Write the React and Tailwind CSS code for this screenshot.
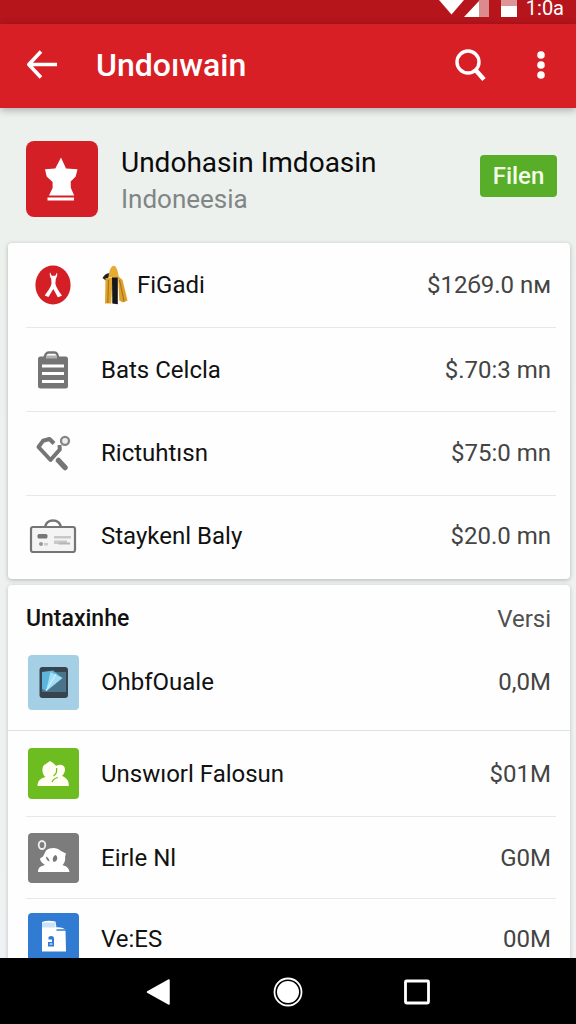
import React from "react";

function StatusBar() {
  return (
    <div className="flex h-6 shrink-0 items-start justify-end bg-[#b6151c] pr-[12px] text-white">
      <svg className="h-[17px] w-[80px]" viewBox="0 0 80 17" aria-hidden="true">
        <path d="M1 0h25L13.500 14.500z" fill="#fff" />
        <path d="M26 17h15V1z" fill="#fff" />
        <path d="M41 0h10v17H41z" fill="#fff" opacity=".5" />
        <path d="M63 0h16v6H63z" fill="#fff" opacity=".55" />
        <path d="M63 6h16v11H63z" fill="#fff" />
      </svg>
      <span className="ml-2 text-xl leading-4">1:0a</span>
    </div>
  );
}

function AppBar() {
  return (
    <header className="z-10 flex h-[84px] shrink-0 items-center bg-[#d91f26] pr-[23px] pb-[2px] pl-[26px] text-white shadow-[0_2px_8px_rgba(0,0,0,0.3)]">
      <button type="button" aria-label="Back" className="h-8 w-8">
        <svg viewBox="0 0 32 32" className="h-8 w-8" fill="none" stroke="#fff" strokeWidth="3.600">
          <path d="M31 15.500H3M15 2.500 2.800 15.500 15 28.500" strokeLinejoin="round" />
        </svg>
      </button>
      <h1 className="ml-[38px] flex-1 text-[32px] leading-10 font-medium">Undoıwain</h1>
      <button type="button" aria-label="Search" className="h-9 w-9">
        <svg viewBox="0 0 36 36" className="h-9 w-9" fill="none" stroke="#fff">
          <circle cx="17" cy="15" r="11" strokeWidth="3.400" />
          <path d="m24.500 23 8.500 9.500" strokeWidth="4.500" />
        </svg>
      </button>
      <button type="button" aria-label="More options" className="ml-[42px] h-8 w-6">
        <svg viewBox="0 0 24 32" className="h-8 w-6" fill="#fff">
          <circle cx="12" cy="6" r="3.800" />
          <circle cx="12" cy="16" r="3.800" />
          <circle cx="12" cy="26" r="3.800" />
        </svg>
      </button>
    </header>
  );
}

function Profile() {
  return (
    <section className="flex items-center pt-[33px] pr-[19px] pb-[26px] pl-[26px]">
      <svg viewBox="0 0 72 76" className="h-[76px] w-[72px] rounded-lg bg-[#d41f26]" aria-hidden="true">
        <path fill="#fff" d="m35 16.500 5 11 11.500.7-1.800 7.300-5 5 .2 6.500 3.300 7.500H23l3.600-7.500V41L20.700 35.500 19 28.200l10.300-.6z" />
        <path fill="#fff" d="M21.500 56.500H48v3H21.500z" />
      </svg>
      <div className="ml-[23px] flex-1 pt-1">
        <h2 className="text-[28px] leading-9 text-[#0a0a0a]">Undohasin Imdoasin</h2>
        <p className="text-[26px] leading-9 text-[#808585]">Indoneesia</p>
      </div>
      <div className="pb-[6px]">
        <button type="button" className="block h-[42px] w-[77px] rounded-[4px] bg-[#58ae28] text-2xl font-medium text-[#f3fbe9]">
          Filen
        </button>
      </div>
    </section>
  );
}

function RibbonIcon() {
  return (
    <svg viewBox="0 0 36 40" className="h-10 w-9" aria-hidden="true">
      <ellipse cx="18" cy="20" rx="17.600" ry="19.600" fill="#d41f26" />
      <path fill="#fff" d="M15 7.200c-.8 3 .2 5 1.200 6.500l.3 5c-1 4.500-4.500 8.300-6.800 11.800l3.800 1.500 4.800-8 4.500 8.300 4.200-1.600c-2.700-4-5.800-7.900-6.600-12l.4-5c1-1.700 2-3.600 1.200-6.300l-1.700 3.300h-3.600z" />
    </svg>
  );
}

function ClipboardIcon() {
  return (
    <svg viewBox="0 0 32 38" className="h-[38px] w-8" aria-hidden="true">
      <path d="M7.500 8c0-4 2-6.500 4-6.500h6C20 1.500 21 4 21 8" fill="none" stroke="#757575" strokeWidth="2.400" />
      <rect x="1" y="5.500" width="30" height="32" rx="2.500" fill="#757575" />
      <path d="M9 4.500h11v3H9z" fill="#b0b0b0" />
      <path d="M5 13.500h22v3H5zM5 21h22v3H5zM5 29h22v3H5z" fill="#fff" />
    </svg>
  );
}

function ToolIcon() {
  return (
    <svg viewBox="0 0 36 36" className="h-9 w-9" aria-hidden="true">
      <path d="M19 8.500 14.500 4 8 5.800 3.500 12l12 13L24.800 14.500 24.500 10" fill="none" stroke="#757575" strokeWidth="4" strokeLinejoin="round" />
      <circle cx="30" cy="5.800" r="4" fill="#eee" stroke="#858585" strokeWidth="2.300" />
      <path d="m23.500 25.500 6.500 7" stroke="#757575" strokeWidth="5.500" strokeLinecap="round" />
    </svg>
  );
}

function BadgeIcon() {
  return (
    <svg viewBox="0 0 48 34" className="h-[34px] w-12" aria-hidden="true">
      <path d="M16 8c1-4.500 3.500-6.500 8-6.500S31 3.500 32 8" fill="none" stroke="#757575" strokeWidth="2.600" />
      <rect x="2" y="8" width="44" height="25" rx="2" fill="#f4f4f4" stroke="#757575" strokeWidth="2.200" />
      <rect x="8.500" y="15" width="10" height="4.500" rx="1.500" fill="#777" />
      <path d="M25 17h17v2.500H25zM25 21.500h13V25H25z" fill="#c8c8c8" />
      <path d="M31 23.500h10v2H29z" fill="#b5b5b5" />
      <circle cx="12" cy="25" r="2" fill="#999" />
      <path d="M15 24h4v2.500h-4z" fill="#ccc" />
    </svg>
  );
}

function FlagEmblem() {
  return (
    <svg viewBox="0 0 28 40" className="mr-2 h-10 w-7 shrink-0" aria-hidden="true">
      <path d="M9.500 8.500C7 7.500 3.500 9 1.500 13l4 3z" fill="#222" />
      <path d="M4.500 13h7l-1.200 25.500H4z" fill="#e0a42c" />
      <path d="M11 12h5.800v27.300l-5.500-.8z" fill="#161616" />
      <path d="m17 11 4.500 4 5 20.500-4.500 2-3.700-2z" fill="#dfa02a" />
      <path d="m18.500 15 4.600 21.500M7.500 15l-.7 23" stroke="#9b7021" strokeWidth="1" />
      <path d="M7.500 12.500c.3-6 2.200-11.300 5.200-11.700 3 .2 4.300 5.800 5 11.700z" fill="#e6ac32" />
    </svg>
  );
}

function PhoneTile() {
  return (
    <svg viewBox="0 0 51 55" className="h-[55px] w-[51px] rounded-[4px] bg-[#a5cfe5]" aria-hidden="true">
      <rect x="11.500" y="12" width="28.500" height="31" rx="3" fill="#37444f" />
      <path d="M14 17h24v20H14z" fill="#4b748b" />
      <path d="m14 17 11-1.500L34.500 23 19 36l-5-2z" fill="#5bb5dc" />
      <path d="M18 36 22.500 17l12 6z" fill="#a3dff4" />
      <path d="m18 36 10-17" stroke="#d6f5ff" strokeWidth="1" />
    </svg>
  );
}

function PeopleTile() {
  return (
    <svg viewBox="0 0 51 51" className="h-[51px] w-[51px] rounded-[4px] bg-[#6dbd20]" aria-hidden="true">
      <path fill="#fffef0" d="M22 13c3.500 2 5.500 4 6 5 4-2.500 9-1 9 3.500 0 3-1.500 5-3 6.500 4 1.500 7 4 6.800 10H9.500c0-6 4-8 8-9-2.300-2-3.300-4.500-3-8 .2-4.500 3.900-5 7.500-8z" />
      <path d="M28.500 20c1 4-1 6.500-3 8M24 34c1-2.500 3.500-4 6-4.500" fill="none" stroke="#6dbd20" strokeWidth="1.200" />
    </svg>
  );
}

function GrayTile() {
  return (
    <svg viewBox="0 0 51 50" className="h-[50px] w-[51px] rounded-[4px] bg-[#7c7c7c]" aria-hidden="true">
      <ellipse cx="14" cy="12" rx="3.300" ry="4" fill="none" stroke="#eee" strokeWidth="1.800" />
      <path fill="#fff" d="M18 17.500c5-3.500 11-3 15 .5l5 2.500-1 3.500c.8 3.500-1 6.500-2.500 8.200 3.500.8 6.500 2.300 7 6.800H10c0-4.500 2.500-6 7-7-3-2-5-4-5-6.500l3-2z" />
      <path fill="#777" d="M18 23.500c2 .8 3.200 2.700 3.500 5-2.300-.8-3.500-2.500-3.500-5zM27.500 22c3 1.500 2 6.500-1.500 7-2.300-1.800-1-6 1.500-7z" />
    </svg>
  );
}

function DocumentTile() {
  return (
    <svg viewBox="0 0 51 51" className="h-[51px] w-[51px] rounded-[4px] bg-[#327bd2]" aria-hidden="true">
      <path fill="#fff" d="M14 9c4-1.500 8-1.500 13.500-.5l1 6c3-.5 6 .3 9 2l.5 22H14z" />
      <path d="M28.500 17h9.500" fill="none" stroke="#327bd2" strokeWidth="1.500" />
      <path d="M14 12h13.500" stroke="#cce3f7" strokeWidth="5" />
      <path d="M20.500 24c2-1.700 5.500-1.300 5.500 1.500v8h-6v-4.500h4v-2.500h-3.500z" fill="#327bd2" />
      <path d="M21.500 31h3" stroke="#fff" strokeWidth="1" />
    </svg>
  );
}

function Row({ icon, emblem, label, value, size, divider = true }) {
  return (
    <li className={`flex items-center pr-[5px] ${size} ${divider ? "border-b border-[#e6e8ea]" : ""}`}>
      <span className="flex w-[54px] shrink-0 items-center justify-center">{icon}</span>
      <span className="ml-[21px] flex flex-1 items-center text-2xl text-[#111]">
        {emblem}
        {label}
      </span>
      <span className="text-2xl text-[#444]">{value}</span>
    </li>
  );
}

function NavigationBar() {
  return (
    <nav className="flex h-[66px] shrink-0 items-center justify-center gap-[97px] bg-black pt-[2px]">
      <button type="button" aria-label="Back" className="h-8 w-8">
        <svg viewBox="0 0 32 32" className="h-8 w-8">
          <path d="M26 4v24L4.500 16z" fill="#fff" stroke="#fff" strokeWidth="1.500" strokeLinejoin="round" />
        </svg>
      </button>
      <button type="button" aria-label="Home" className="h-8 w-8">
        <svg viewBox="0 0 32 32" className="h-8 w-8">
          <circle cx="16" cy="16" r="13.500" fill="none" stroke="#fff" strokeWidth="1.800" />
          <circle cx="16" cy="16" r="11" fill="#fff" />
        </svg>
      </button>
      <button type="button" aria-label="Overview" className="h-8 w-8">
        <svg viewBox="0 0 32 32" className="h-8 w-8">
          <rect x="4.500" y="5" width="23" height="22" rx="1" fill="none" stroke="#fff" strokeWidth="2.800" />
        </svg>
      </button>
    </nav>
  );
}

export default function App() {
  return (
    <div className="flex h-screen flex-col bg-[#edf1ee] font-['Roboto',sans-serif]">
      <StatusBar />
      <AppBar />
      <main className="min-h-0 flex-1 overflow-hidden">
        <Profile />
        <div className="flex flex-col gap-[6px] bg-[linear-gradient(#edf1ee,#f0f1f2)] pr-[6px] pl-2">
          <ul className="rounded-[4px] bg-[#fefefe] pr-[14px] pl-[18px] shadow-[0_1px_4px_rgba(0,0,0,0.25)]">
            <Row size="h-[85px]" icon={<RibbonIcon />} emblem={<FlagEmblem />} label="FiGadi" value="$12б9.0 nм" />
            <Row size="h-[84px]" icon={<ClipboardIcon />} label="Bats Celcla" value="$.70:3 mn" />
            <Row size="h-[84px] pb-[2px]" icon={<ToolIcon />} label="Rictuhtısn" value="$75:0 mn" />
            <Row size="h-[83px] pb-1" icon={<BadgeIcon />} label="Staykenl Baly" value="$20.0 mn" divider={false} />
          </ul>
          <section className="rounded-[4px] bg-[#fefefe] shadow-[0_1px_4px_rgba(0,0,0,0.2)]">
            <div className="flex h-[66px] items-center justify-between pt-[2px] pr-[19px] pl-[18px]">
              <h3 className="text-[23px] font-medium text-[#111]">Untaxinhe</h3>
              <span className="text-2xl text-[#505050]">Versi</span>
            </div>
            <ul className="border-b border-[#dfe2e4] pr-[14px] pl-[18px]">
              <Row size="h-[79px] pb-[17px]" icon={<PhoneTile />} label="OhbfOuale" value="0,0M" divider={false} />
            </ul>
            <ul className="pr-[14px] pl-[18px]">
              <Row size="h-[86px]" icon={<PeopleTile />} label="Unswıorl Falosun" value="$01M" />
              <Row size="h-[82px]" icon={<GrayTile />} label="Eirle Nl" value="G0M" />
              <Row size="h-[80px]" icon={<DocumentTile />} label="Ve:ES" value="00M" />
            </ul>
          </section>
        </div>
      </main>
      <NavigationBar />
    </div>
  );
}
